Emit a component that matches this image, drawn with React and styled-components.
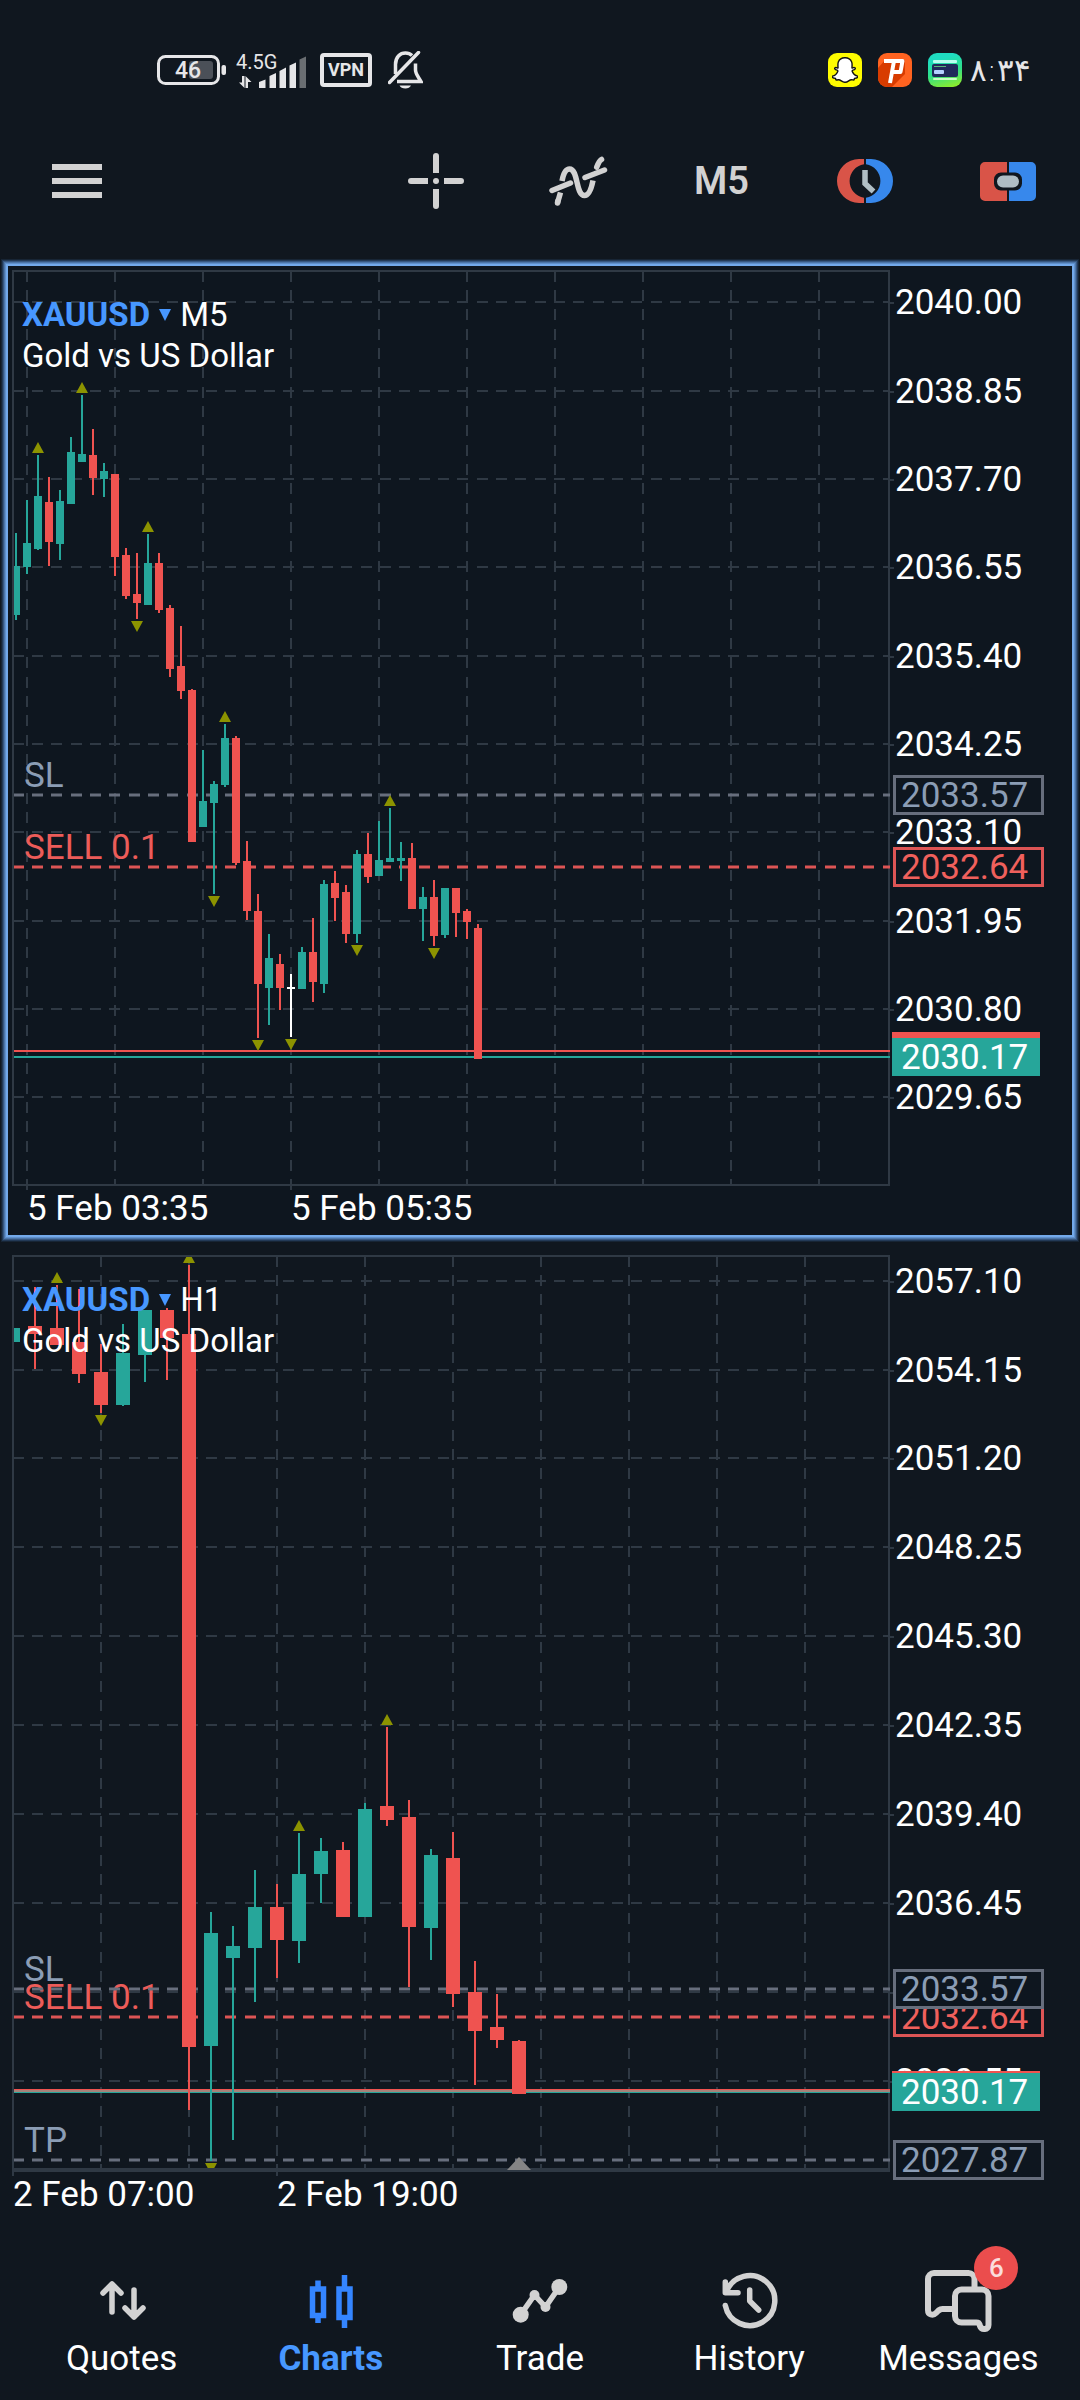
import React from 'react';
import styled, { createGlobalStyle, css } from 'styled-components';
import { FaSnapchatGhost } from 'react-icons/fa';

const colors = {
    page: '#10171f',
    panel: '#0e161f',
    grid: '#2f3944',
    up: '#26a69a',
    down: '#ef5350',
    flat: '#ffffff',
    fractal: '#8c9300',
    level: '#676e7d',
    levelText: '#8b9db5',
    order: '#dd5555',
    mixed: '#a5837a',
    accent: '#4797ff',
    icon: '#d2d2d2'
};

const GlobalStyle = createGlobalStyle`
    * {
        box-sizing: border-box;
    }
    body {
        margin: 0;
        background: ${colors.page};
        color: #fff;
        font-family: Roboto, "Noto Sans", sans-serif;
    }
    button {
        padding: 0;
        border: 0;
        background: none;
        color: inherit;
        font: inherit;
        cursor: pointer;
    }
    svg {
        display: block;
    }
`;

const Page = styled.div`
    display: flex;
    flex-direction: column;
    min-height: 100vh;
`;

const StatusBar = styled.header`
    display: flex;
    justify-content: space-between;
    align-items: center;
    height: 140px;
    padding: 0 49px 0 157px;
`;

const StatusGroup = styled.div`
    display: flex;
    align-items: center;
    gap: ${props => props.$gap}px;
`;

const VpnBadge = styled.span`
    width: 52px;
    height: 34px;
    margin-right: 2px;
    border: 4px solid #e6e6e8;
    border-radius: 4px;
    color: #e6e6e8;
    font-size: 18px;
    font-weight: 700;
    line-height: 26px;
    text-align: center;
`;

const AppTile = styled.span`
    display: flex;
    align-items: center;
    justify-content: center;
    width: 34px;
    height: 34px;
    border-radius: 9px;
    background: ${props => props.$fill};
    overflow: hidden;
`;

const Clock = styled.time`
    margin-left: -8px;
    color: #e6e6e8;
    font-family: "DejaVu Sans", sans-serif;
    font-weight: 200;
    font-size: 31px;
    line-height: 40px;
`;

const Toolbar = styled.div`
    display: flex;
    justify-content: space-between;
    align-items: center;
    height: 82px;
    padding: 0 1px 0 52px;
    color: ${colors.icon};
`;

const Tools = styled.div`
    display: flex;
`;

const ToolButton = styled.button`
    display: flex;
    align-items: center;
    justify-content: center;
    width: ${props => props.$wide ? 143 : 50}px;
    height: 82px;
`;

const Timeframe = styled.span`
    font-size: 38px;
    font-weight: 600;
`;

const Charts = styled.main`
    display: flex;
    flex-direction: column;
    gap: 16px;
    padding: 44px 8px 0;
`;

const selectedPanel = css`
    background: ${colors.panel};
    box-shadow:
        0 0 0 2px #73a9ea,
        0 0 0 3px #5f8fca,
        0 0 0 4px #4c75a8,
        0 0 0 5px #375780,
        0 0 0 6px #233a57,
        0 0 0 7px #172535;
`;

const Panel = styled.section`
    display: grid;
    grid-template-columns: minmax(0, 1fr) 178px;
    padding: 4px;
    ${props => props.$selected && selectedPanel}
`;

const Plot = styled.div`
    position: relative;
    height: ${props => props.$height}px;
    box-shadow:
        inset 0 0 0 2px ${colors.grid},
        inset 0 -${props => props.$base}px 0 ${colors.grid};
`;

const Canvas = styled.svg`
    width: 100%;
    height: 100%;
    overflow: visible;
    font-size: 35px;
`;

const Title = styled.div`
    position: absolute;
    top: 24px;
    left: 10px;
    font-size: 33px;
    line-height: 41px;
`;

const TitleRow = styled.div`
    display: flex;
    align-items: center;
    gap: 9px;
`;

const SymbolButton = styled.button`
    display: flex;
    align-items: center;
    gap: 9px;
    color: ${colors.accent};
    font-weight: 700;
`;

const Axis = styled.div`
    position: relative;
    font-size: 35px;
    line-height: 40px;
`;

// every axis mark is centred on the y of its price
const Tick = styled.span`
    position: absolute;
    left: 0;
    display: flex;
    align-items: center;
    gap: 1px;
    margin-top: 1px;
    transform: translateY(-50%);
    &::before {
        content: '';
        width: 4px;
        height: 2px;
        background: ${colors.grid};
    }
`;

const tagKinds = {
    level: css`
        left: 3px;
        width: 151px;
        height: 40px;
        padding-left: 5px;
        border: 3px solid ${colors.level};
        background: ${colors.panel};
        color: ${colors.levelText};
        line-height: 36px;
    `,
    order: css`
        left: 3px;
        width: 151px;
        height: 40px;
        padding-left: 5px;
        border: 3px solid ${colors.order};
        background: ${colors.panel};
        color: #f0605c;
        line-height: 36px;
    `,
    ask: css`
        left: 2px;
        width: 148px;
        height: 38px;
        background: ${colors.down};
    `,
    bid: css`
        left: 2px;
        width: 148px;
        height: 38px;
        padding-left: 9px;
        background: ${colors.up};
        line-height: 40px;
    `
};

const PriceTag = styled.span`
    position: absolute;
    transform: translateY(-50%);
    ${props => tagKinds[props.$kind]}
`;

const TimeRow = styled.div`
    display: flex;
    align-items: center;
    grid-column: 1 / -1;
    height: 45px;
    padding-left: ${props => props.$start}px;
    font-size: 35px;
    line-height: 40px;
`;

const TimeLabel = styled.span`
    flex: 0 0 264px;
`;

const NavBar = styled.nav`
    display: flex;
    margin-top: auto;
    padding: 48px 17px 21px;
`;

const NavLink = styled.a`
    flex: 1 1 0;
    display: flex;
    flex-direction: column;
    align-items: center;
    gap: 6px;
    color: ${props => props.$active ? colors.accent : '#fff'};
    font-size: 35px;
    font-weight: ${props => props.$active ? 700 : 400};
    line-height: 40px;
    text-decoration: none;
`;

const NavIcon = styled.span`
    position: relative;
    color: ${props => props.$active ? '#3485ff' : colors.icon};
`;

const Badge = styled.span`
    position: absolute;
    top: -23px;
    left: 51px;
    width: 44px;
    height: 44px;
    border-radius: 50%;
    background: #eb4d4d;
    color: #fbdcdc;
    font-size: 26px;
    font-weight: 500;
    line-height: 45px;
    text-align: center;
`;

// candle: [kind, high, body top, body bottom, low, fractal]
const m5 = {
    id: 'm5',
    timeframe: 'M5',
    selected: true,
    height: 916,
    base: 2,
    step: 11,
    firstX: 4,
    bodyWidth: 8,
    gridX: [15, 103, 191, 279, 367, 455, 543, 631, 719, 807],
    marks: [15, 279],
    times: ['5 Feb 03:35', '5 Feb 05:35'],
    timeStart: 15,
    ticks: [
        ['2040.00', 32], ['2038.85', 121], ['2037.70', 209], ['2036.55', 297], ['2035.40', 386],
        ['2034.25', 474], ['2033.10', 562], ['2031.95', 651], ['2030.80', 739], ['2029.65', 827]
    ],
    orders: [
        { kind: 'order', label: 'SELL 0.1', price: '2032.64', y: 597 },
        { kind: 'level', label: 'SL', price: '2033.57', y: 525 }
    ],
    ask: 781,
    bid: 787,
    price: '2030.17',
    candles: [
        ['up', 263, 296, 345, 350], ['up', 230, 273, 297, 304], ['up', 185, 226, 279, 280, 'top'],
        ['down', 207, 232, 272, 296], ['up', 220, 231, 274, 290], ['up', 167, 182, 234, 234],
        ['up', 125, 184, 192, 192, 'top'], ['down', 159, 185, 208, 225], ['up', 193, 201, 209, 227],
        ['down', 204, 204, 287, 306], ['down', 278, 285, 326, 329], ['down', 283, 324, 333, 349, 'bottom'],
        ['up', 264, 293, 335, 335, 'top'], ['down', 283, 293, 340, 343], ['down', 335, 338, 399, 407],
        ['down', 356, 396, 421, 429], ['down', 419, 420, 572, 572], ['up', 480, 531, 557, 557],
        ['up', 511, 514, 533, 624, 'bottom'], ['up', 454, 468, 515, 517, 'top'], ['down', 466, 468, 593, 595],
        ['down', 571, 591, 641, 650], ['down', 624, 641, 714, 768, 'bottom'], ['up', 664, 688, 718, 755],
        ['down', 684, 694, 718, 740], ['flat', 704, 717, 719, 767, 'bottom'], ['up', 677, 682, 719, 719],
        ['down', 648, 682, 712, 732], ['up', 610, 614, 714, 723], ['down', 601, 613, 628, 651],
        ['down', 615, 622, 664, 673], ['up', 580, 584, 664, 673, 'bottom'], ['down', 563, 584, 607, 613],
        ['up', 551, 590, 606, 606], ['up', 538, 588, 592, 592, 'top'], ['up', 572, 588, 591, 611],
        ['down', 573, 588, 639, 639], ['up', 617, 627, 639, 671], ['down', 610, 627, 666, 676, 'bottom'],
        ['up', 618, 618, 665, 668], ['down', 618, 618, 643, 667], ['down', 639, 641, 652, 669],
        ['down', 654, 658, 789, 789]
    ]
};

const h1 = {
    id: 'h1',
    timeframe: 'H1',
    height: 917,
    base: 4,
    step: 22,
    firstX: 1,
    bodyWidth: 14,
    gridX: [89, 177, 265, 353, 441, 529, 617, 705, 793],
    marks: [1, 265],
    times: ['2 Feb 07:00', '2 Feb 19:00'],
    timeStart: 1,
    ticks: [
        ['2057.10', 26], ['2054.15', 115], ['2051.20', 203], ['2048.25', 292], ['2045.30', 381],
        ['2042.35', 470], ['2039.40', 559], ['2036.45', 648], ['2033.50', 737], ['2030.55', 826]
    ],
    orders: [
        { kind: 'order', label: 'SELL 0.1', price: '2032.64', y: 762 },
        { kind: 'level', label: 'SL', price: '2033.57', y: 734 },
        { kind: 'level', label: 'TP', price: '2027.87', y: 905 }
    ],
    ask: 835,
    bid: 837,
    price: '2030.17',
    shift: 507,
    candles: [
        ['up', 73, 73, 87, 87], ['down', 32, 71, 79, 114], ['down', 30, 73, 90, 90, 'top'],
        ['down', 34, 87, 119, 128], ['down', 89, 117, 150, 158, 'bottom'], ['up', 69, 98, 150, 151],
        ['up', 55, 55, 100, 127], ['down', 53, 55, 83, 125], ['down', 10, 79, 792, 855, 'top'],
        ['up', 657, 678, 791, 906, 'bottom'], ['up', 671, 691, 703, 885], ['up', 615, 652, 693, 747],
        ['down', 629, 652, 685, 723], ['up', 578, 619, 686, 708, 'top'], ['up', 583, 596, 619, 648],
        ['down', 587, 595, 662, 662], ['up', 548, 554, 662, 662], ['down', 472, 551, 565, 571, 'top'],
        ['down', 545, 562, 672, 732], ['up', 594, 600, 673, 705], ['down', 577, 603, 739, 752],
        ['down', 706, 737, 776, 830], ['down', 739, 772, 785, 793], ['down', 785, 786, 839, 839]
    ]
};

const dash = '11 8 11 8 11 9';

const Candle = ({ x, width, data }) => {
    const [kind, high, top, bottom, low, fractal] = data;
    return (
        <g fill={colors[kind]}>
            <rect x={x - 1} y={high} width="2" height={low - high} />
            <rect x={x - width / 2} y={top} width={width} height={bottom - top} />
            {fractal === 'top' && <path fill={colors.fractal} d={`M${x} ${high - 13}l6 11h-12z`} />}
            {fractal === 'bottom' && <path fill={colors.fractal} d={`M${x} ${low + 13}l6-11h-12z`} />}
        </g>
    );
};

const Chart = ({ chart }) => (
    <Panel $selected={chart.selected}>
        <Plot $height={chart.height} $base={chart.base}>
            <Canvas aria-label={`XAUUSD ${chart.timeframe}`}>
                <clipPath id={`clip-${chart.id}`}>
                    <rect x="2" y="2" width="100%" height={chart.height - 2 - chart.base} />
                </clipPath>
                <g stroke={colors.grid} strokeWidth="2">
                    {chart.gridX.map(x => (
                        <line key={x} x1={x} x2={x} y1="1" y2={chart.height} strokeDasharray={dash} />
                    ))}
                    {chart.ticks.map(([price, y]) => (
                        <line key={price} x1="1" x2="100%" y1={y} y2={y} strokeDasharray={dash} />
                    ))}
                    {chart.marks.map(x => (
                        <line key={x} x1={x} x2={x} y1={chart.height - 2} y2={chart.height + 4} />
                    ))}
                </g>
                {chart.orders.map(({ kind, label, y }) => (
                    <g key={label}>
                        <text x="12" y={y - 8} fill={kind === 'order' ? '#ec5c59' : colors.levelText}>{label}</text>
                        <line x1="2" x2="100%" y1={y} y2={y} stroke={colors[kind]} strokeWidth="3" strokeDasharray={dash} strokeDashoffset="1" />
                    </g>
                ))}
                <line x1="2" x2="100%" y1={chart.ask} y2={chart.ask} stroke={colors.down} strokeWidth="2" />
                <line x1="2" x2="100%" y1={chart.bid} y2={chart.bid} stroke={colors.up} strokeWidth="2" />
                {chart.bid - chart.ask < 4 && (
                    <line x1="2" x2="100%" y1={chart.ask + 1} y2={chart.ask + 1} stroke={colors.mixed} strokeWidth="2" />
                )}
                <g clipPath={`url(#clip-${chart.id})`}>
                    {chart.candles.map((data, i) => (
                        <Candle key={i} x={chart.firstX + i * chart.step} width={chart.bodyWidth} data={data} />
                    ))}
                </g>
                {chart.shift && <path fill="#858585" d={`M${chart.shift} 902l12 13h-24z`} />}
            </Canvas>
            <Title>
                <TitleRow>
                    <SymbolButton type="button">
                        XAUUSD
                        <svg width="12" height="12" fill="currentColor"><path d="M0 0h12L6 12z" /></svg>
                    </SymbolButton>
                    <span>{chart.timeframe}</span>
                </TitleRow>
                <div>Gold vs US Dollar</div>
            </Title>
        </Plot>
        <Axis>
            {chart.ticks.map(([price, y]) => <Tick key={price} style={{ top: y }}>{price}</Tick>)}
            {chart.orders.map(({ kind, price, y }) => (
                <PriceTag key={price} $kind={kind} style={{ top: y }}>{price}</PriceTag>
            ))}
            <PriceTag $kind="ask" style={{ top: chart.ask }} />
            <PriceTag $kind="bid" style={{ top: chart.bid }}>{chart.price}</PriceTag>
        </Axis>
        <TimeRow $start={chart.timeStart}>
            {chart.times.map(time => <TimeLabel key={time}>{time}</TimeLabel>)}
        </TimeRow>
    </Panel>
);

const BatteryIcon = () => (
    <svg width="69" height="30" viewBox="0 0 69 30">
        <rect x="1.5" y="1.5" width="60" height="27" rx="7" fill="none" stroke="#e6e6e8" strokeWidth="3" />
        <rect x="32" y="6" width="24" height="18" rx="3" fill="#4b5058" />
        <rect x="64.5" y="10" width="4.5" height="10" rx="2" fill="#e6e6e8" />
        <text x="31" y="23" fontSize="23" fontWeight="500" fill="#e6e6e8" textAnchor="middle">46</text>
    </svg>
);

const SignalIcon = () => (
    <svg width="70" height="40" viewBox="0 -4 70 40" fill="#e6e6e8">
        <text x="0" y="15" fontSize="20">4.5G</text>
        <path d="M6 22h2.5v12L3 28.5h3zM9.500 34V22l6 6H12v6z" />
        <path d="M23 34v-6l6.500-2.500V34zM33.500 34V22l6.500-3v15zM43.500 34V17l6.500-3.500V34zM53.500 34V11.500L60 8.500V34z" />
        <path fill="#6a6e72" d="M63.500 34V5.500L70 2.500V34z" />
    </svg>
);

const BellOffIcon = () => (
    <svg width="35" height="38" viewBox="0 0 35 38" fill="none" stroke="#e6e6e8" strokeWidth="3.5">
        <path d="M7.500 23V13.500C7.500 6 12 2 17.500 2c3 0 5 1 6.500 2.500M27.500 12.500V19c0 4 3 7 5.500 11.500H9" />
        <path d="M1.500 31.500L30.500 1.500" strokeLinecap="round" />
        <path d="M11.500 34.500h11.500c-1 2-3 3-5.700 3s-5-1-5.800-3z" fill="#e6e6e8" stroke="none" />
    </svg>
);

const PsiphonIcon = () => (
    <svg width="34" height="34" viewBox="0 0 34 34" fill="none">
        <path d="M7 7l-7 8v19h14l13-13V7z" fill="#d83c00" />
        <path d="M6 8h18.500l-2 11H13M16 8L12 30" stroke="#fff" strokeWidth="4" strokeLinejoin="round" />
    </svg>
);

const CardIcon = () => (
    <svg width="34" height="34" viewBox="0 0 34 34">
        <rect x="5" y="7" width="24" height="3" rx="1" fill="#b9fff0" />
        <rect x="4" y="11" width="26" height="13" rx="2" fill="#202a5a" />
        <rect x="6" y="13" width="12" height="1" fill="#59b67a" />
        <rect x="6" y="17" width="10" height="4" rx="1" fill="#b5d2ff" />
        <rect x="5" y="25" width="24" height="2" rx="1" fill="#c9ffc4" />
    </svg>
);

const MenuIcon = () => (
    <svg width="50" height="34" viewBox="0 0 50 34" fill="currentColor">
        <path d="M0 0h50v6H0zM0 14h50v6H0zM0 28h50v6H0z" />
    </svg>
);

const CrosshairIcon = () => (
    <svg width="56" height="56" viewBox="0 0 56 56" fill="currentColor">
        <path d="M25 20V3a3 3 0 0 1 6 0v17zM25 36v17a3 3 0 0 0 6 0V36zM20 25H3a3 3 0 0 0 0 6h17zM36 25h17a3 3 0 0 1 0 6H36z" />
        <circle cx="28" cy="28" r="3" />
    </svg>
);

const IndicatorIcon = () => (
    <svg width="60" height="50" viewBox="0 0 60 50" fill="none" stroke="currentColor" strokeWidth="5.5" strokeLinecap="round">
        <path d="M13 25C14.500 17 16.500 13 20.500 13c9 0 6 26.500 15 26.500 4 0 6.500-5 8.500-15" strokeLinecap="butt" />
        <path d="M11.500 36.500L8.500 47" strokeLinecap="butt" />
        <path d="M8.800 45L8.500 47" />
        <path d="M3 34.500L21.500 27M36 21.500l19.500-7.500" />
        <path d="M52.500 3.500l-.5.300c-2 1.200-3 4-4.300 7.400" />
    </svg>
);

const HistoryTradeIcon = () => (
    <svg width="56" height="44" viewBox="0 0 56 44">
        <path fill="#d95448" d="M27 0H22a22 22 0 0 0 0 44h5v-5.200a17 17 0 0 1 0-33.600z" />
        <path fill="#3788ec" d="M29 0h5a22 22 0 0 1 0 44h-5v-5.200a17 17 0 0 0 0-33.600z" />
        <path fill="none" stroke="#b0bec5" strokeWidth="5.5" d="M28 11v13.500l8.500 8" />
    </svg>
);

const OrderIcon = () => (
    <svg width="56" height="39" viewBox="0 0 56 39">
        <path fill="#d95448" d="M27 0H5a5 5 0 0 0-5 5v29a5 5 0 0 0 5 5h22V28.500h-6a7 7 0 0 1-7-7v-4a7 7 0 0 1 7-7h6z" />
        <path fill="#3788ec" d="M29 0h22a5 5 0 0 1 5 5v29a5 5 0 0 1-5 5H29V28.500h6a7 7 0 0 0 7-7v-4a7 7 0 0 0-7-7h-6z" />
        <rect x="17" y="13.5" width="22" height="12" rx="6" fill="#b0bec5" />
    </svg>
);

const NavSvg = ({ children }) => (
    <svg width="70" height="64" viewBox="0 0 70 64" fill="none" stroke="currentColor" strokeWidth="5.5" strokeLinecap="round" strokeLinejoin="round">
        {children}
    </svg>
);

const navItems = [
    { label: 'Quotes', icon: <path d="M25 43V15M16 24l9-9 9 9M47 21v27M38 39l9 9 9-9" /> },
    {
        label: 'Charts',
        active: true,
        icon: (
            <g strokeLinecap="butt" strokeLinejoin="miter">
                <path d="M16.500 20h11v26.500h-11zM43 20h11v28.500H43z" />
                <path d="M22 11.500V20M22 46.500V54M48.500 6v14M48.500 48.500V59" />
            </g>
        )
    },
    {
        label: 'Trade',
        icon: (
            <g fill="currentColor">
                <path d="M15.700 45.700L29.500 26l11 12L54.300 18" fill="none" />
                <g stroke="none">
                    <circle cx="15.7" cy="45.7" r="8" />
                    <circle cx="29.5" cy="26" r="5" />
                    <circle cx="40.5" cy="38" r="5" />
                    <circle cx="54.3" cy="18" r="8" />
                </g>
            </g>
        )
    },
    {
        label: 'History',
        icon: <path d="M11.300 36.500A25 25 0 1 0 12.500 22.500M11.300 13v10.700H24M35.700 21v11l9 9" />
    },
    {
        label: 'Messages',
        badge: 6,
        icon: (
            <g strokeWidth="6">
                <path strokeLinecap="butt" d="M51.500 19v-9a6 6 0 0 0-6-6H11a6 6 0 0 0-6 6v31c0 5 5 6 8 3l2.500-2.500q2-1.500 4-1.500h13" />
                <path d="M38.500 20.500H59a6.500 6.500 0 0 1 6.500 6.500v29c0 5-7 5.500-8.500 1l-.5-1.500q-.5-2-3-2h-15A6.500 6.500 0 0 1 32 47V27a6.500 6.500 0 0 1 6.500-6.500z" />
            </g>
        )
    }
];

export default function App() {
    return (
        <Page>
            <GlobalStyle />
            <StatusBar>
                <StatusGroup $gap={14}>
                    <StatusGroup $gap={10}>
                        <BatteryIcon />
                        <SignalIcon />
                    </StatusGroup>
                    <VpnBadge>VPN</VpnBadge>
                    <BellOffIcon />
                </StatusGroup>
                <StatusGroup $gap={16}>
                    <AppTile $fill="#fffc00">
                        <FaSnapchatGhost size={26} color="#fff" stroke="#111" strokeWidth={28} />
                    </AppTile>
                    <AppTile $fill="#ff6320"><PsiphonIcon /></AppTile>
                    <AppTile $fill="linear-gradient(165deg, #1fdcc0 20%, #2fe08a 55%, #9cf01c)"><CardIcon /></AppTile>
                    <Clock dateTime="08:34">۸:۳۴</Clock>
                </StatusGroup>
            </StatusBar>
            <Toolbar>
                <ToolButton type="button" aria-label="Menu"><MenuIcon /></ToolButton>
                <Tools>
                    <ToolButton $wide type="button" aria-label="Crosshair"><CrosshairIcon /></ToolButton>
                    <ToolButton $wide type="button" aria-label="Indicators"><IndicatorIcon /></ToolButton>
                    <ToolButton $wide type="button"><Timeframe>M5</Timeframe></ToolButton>
                    <ToolButton $wide type="button" aria-label="Trade history"><HistoryTradeIcon /></ToolButton>
                    <ToolButton $wide type="button" aria-label="New order"><OrderIcon /></ToolButton>
                </Tools>
            </Toolbar>
            <Charts>
                <Chart chart={m5} />
                <Chart chart={h1} />
            </Charts>
            <NavBar>
                {navItems.map(({ label, icon, active, badge }) => (
                    <NavLink key={label} href={`#${label.toLowerCase()}`} $active={active}>
                        <NavIcon $active={active}>
                            <NavSvg>{icon}</NavSvg>
                            {badge && <Badge>{badge}</Badge>}
                        </NavIcon>
                        {label}
                    </NavLink>
                ))}
            </NavBar>
        </Page>
    );
}
